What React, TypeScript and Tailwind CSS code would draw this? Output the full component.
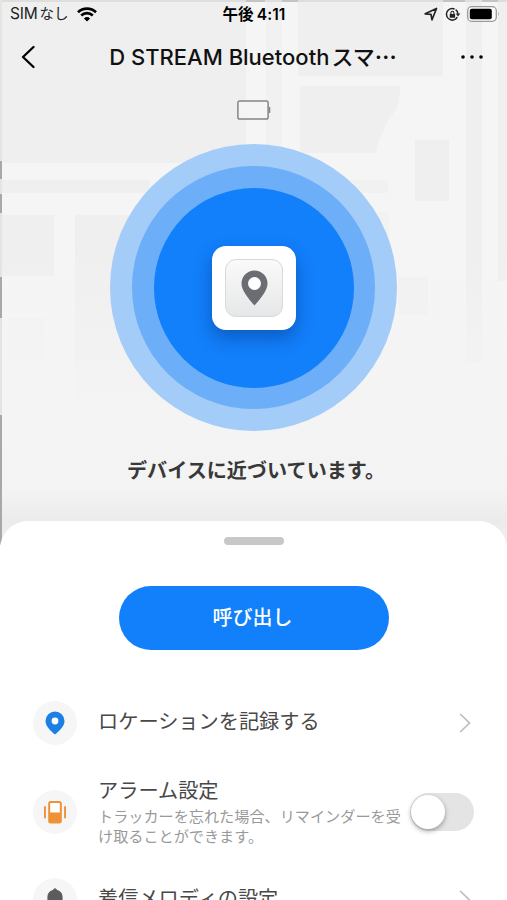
import { useState } from 'react';

const sans = "font-['Inter','Noto_Sans_CJK_JP',sans-serif]";

// Faded street map behind the header and the radar
function MapBackground() {
  return (
    <svg className="absolute inset-0 h-full w-full" viewBox="0 0 507 545" preserveAspectRatio="none" aria-hidden="true">
      <defs>
        <linearGradient id="mapFade" x1="0" y1="0" x2="0" y2="1">
          <stop offset="0.45" stopColor="#f4f4f4" stopOpacity="0" />
          <stop offset="0.78" stopColor="#f4f4f4" />
          <stop offset="0.9" stopColor="#f3f3f3" />
          <stop offset="0.957" stopColor="#ebebeb" />
          <stop offset="1" stopColor="#f0f0f0" />
        </linearGradient>
      </defs>
      <rect width="507" height="545" fill="#f5f5f5" />
      <g fill="#efefef">
        <rect x="2" y="2" width="244" height="161" />
        <rect x="266" y="2" width="16" height="150" fill="#f1f1f1" />
        <rect x="298" y="2" width="145" height="74" />
        <path d="M300 86h101l-4 22-9 12-10 23-2 10h-76z" />
        <rect x="2" y="180" width="148" height="13" />
        <rect x="330" y="180" width="58" height="13" fill="#f1f1f1" />
        <rect x="2" y="215" width="52" height="61" />
        <rect x="75" y="215" width="175" height="190" />
        <rect x="8" y="318" width="36" height="42" fill="#f1f1f1" />
        <rect x="340" y="212" width="49" height="60" fill="#f2f2f2" />
        <rect x="415" y="140" width="34" height="61" />
        <rect x="398" y="277" width="30" height="38" fill="#f1f1f1" />
        <rect x="466" y="2" width="16" height="360" />
        <rect x="498" y="2" width="9" height="279" />
      </g>
      <rect width="507" height="545" fill="url(#mapFade)" />
      <rect width="507" height="2" fill="#dedede" />
      <rect width="2" height="545" fill="#e4e4e4" />
      <g fill="#a8a8a8">
        <rect x="0" y="161" width="2" height="18" />
        <rect x="0" y="194" width="2" height="19" />
        <rect x="0" y="277" width="2" height="41" />
        <rect x="0" y="415" width="2" height="130" />
      </g>
      <g fill="#c4c4c4">
        <rect x="246" y="0" width="19" height="2" />
        <rect x="282" y="0" width="16" height="2" />
        <rect x="443" y="0" width="22" height="2" />
        <rect x="482" y="0" width="16" height="2" />
      </g>
    </svg>
  );
}

function StatusBar() {
  return (
    <div className="grid h-[28px] grid-cols-3 items-center pl-[10px] pr-[7px] text-black">
      <div className="flex items-center whitespace-nowrap text-[15.5px] leading-5 tracking-[-0.2px] text-[#222]">
        <span>SIM</span>
        <span className="ml-[2px] text-[14.5px] tracking-normal">なし</span>
        <svg className="ml-[8px]" width="20" height="15" viewBox="0 0 20 15" fill="none" stroke="#000" strokeWidth="2.7">
          <path d="M1 5.2a13 13 0 0 1 18 0" />
          <path d="M4.2 8.5a8.4 8.4 0 0 1 11.6 0" />
          <path d="M10 14.6 6.9 11.5a4.5 4.5 0 0 1 6.2 0z" fill="#000" stroke="none" />
        </svg>
      </div>
      <div className="-ml-[2px] pt-[2px] whitespace-nowrap text-center text-[15.5px] font-semibold leading-5 tracking-[0.1px]">
        <span className="font-bold">午後</span>
        <span className="ml-[3px]">4:11</span>
      </div>
      <div className="flex items-center justify-end">
        <svg width="14" height="14" viewBox="0 0 14 14" fill="none" stroke="#222" strokeWidth="1.7" strokeLinejoin="round">
          <path d="M1.200 6.800 12.500 1.500 8 12.800 7 7.400z" />
        </svg>
        <svg className="ml-[7px]" width="16" height="15" viewBox="0 0 16 15" fill="none" stroke="#222" strokeWidth="1.5">
          <path d="M12.300 10.200A5.800 5.800 0 1 1 9.600 2" />
          <path d="M10.600 2.600A5.800 5.800 0 0 1 13 6.600" />
          <path d="M10.700 6.400h4.600L13 9.400z" fill="#222" stroke="none" />
          <rect x="4.700" y="6.900" width="5.400" height="3.900" rx="0.600" fill="#222" stroke="none" />
          <path d="M5.900 7V5.800a1.500 1.500 0 0 1 3 0V7" strokeWidth="1.1" />
        </svg>
        <svg className="ml-[6px]" width="33" height="16" viewBox="0 0 33 16">
          <rect x="0.7" y="0.7" width="28.6" height="14.6" rx="4" fill="#fafafa" stroke="#999" strokeWidth="1.3" />
          <rect x="2.8" y="2.7" width="22" height="10.6" rx="2" fill="#000" />
          <path d="M31 5.8q1.500 2.200 0 4.400z" fill="#999" />
        </svg>
      </div>
    </div>
  );
}

function Header() {
  return (
    <header className="flex h-[58px] items-center justify-between pl-[21px] pr-[24px]">
      <button aria-label="Back" className="w-[26px]">
        <svg width="14" height="24" viewBox="0 0 14 24" fill="none" stroke="#000" strokeWidth="2.3" strokeLinecap="round" strokeLinejoin="round">
          <path d="M12.5 2 2 12l10.5 10" />
        </svg>
      </button>
      <h1 className="-ml-[2px] -mt-[2px] whitespace-nowrap text-[22px] font-medium leading-7 text-[#111]">
        D STREAM Bluetooth<span className="ml-[2px]">スマ</span>
        <span className="font-['Noto_Sans_CJK_JP',sans-serif] font-bold">⋯</span>
      </h1>
      <button aria-label="More">
        <svg width="22" height="4" viewBox="0 0 22 4" fill="#000">
          <circle cx="2" cy="2" r="1.8" />
          <circle cx="11" cy="2" r="1.8" />
          <circle cx="20" cy="2" r="1.8" />
        </svg>
      </button>
    </header>
  );
}

function Radar() {
  return (
    <div className="mx-auto mt-[24px] flex size-[287px] items-center justify-center rounded-full bg-[#a3ccf8]">
      <div className="flex size-[243px] items-center justify-center rounded-full bg-[#6caef7]">
        <div className="flex size-[200px] items-center justify-center rounded-full bg-[#127ffb]">
          <div className="flex size-[84px] items-center justify-center rounded-[14px] bg-white shadow-[0_8px_18px_rgba(0,40,110,0.4)]">
            <div className="flex size-[58px] items-center justify-center rounded-[11px] border border-[#d9d9d9] bg-linear-to-b from-[#fafafa] to-[#e6e7e8]">
              <svg className="ml-[2px]" width="27" height="36" viewBox="0 0 27 36">
                <path fill="#6a6d71" d="M13.500.5a13 13 0 0 1 13 13c0 7-6.500 14.500-13 22C7 28 .5 20.500.5 13.500a13 13 0 0 1 13-13z" />
                <circle cx="13.5" cy="13.5" r="6.5" fill="#fff" />
              </svg>
            </div>
          </div>
        </div>
      </div>
    </div>
  );
}

function Chevron() {
  return (
    <svg width="12" height="20" viewBox="0 0 12 20" fill="none" stroke="#bdbdbd" strokeWidth="1.7">
      <path d="m1.200 1 9.300 9-9.300 9" />
    </svg>
  );
}

function RowIcon({ children }: { children: React.ReactNode }) {
  return (
    <div className="flex size-[44px] shrink-0 items-center justify-center rounded-full bg-[#f6f6f6]">{children}</div>
  );
}

export default function App() {
  const [alarm, setAlarm] = useState(false);

  return (
    <div className={`relative h-[900px] w-[507px] overflow-hidden bg-white ${sans}`}>
      <div className="absolute inset-x-0 top-0 h-[545px]">
        <MapBackground />
      </div>

      <div className="relative flex h-full flex-col">
        <div className="h-[521px] shrink-0">
          <StatusBar />
          <Header />
          <svg className="mx-auto mt-[14px] block" width="34" height="20" viewBox="0 0 34 20" fill="none">
            <rect x="0.9" y="0.9" width="30.200" height="18.200" rx="1.800" fill="#f5f5f5" stroke="#858585" strokeWidth="1.500" />
            <path d="M32.500 7v6" stroke="#858585" strokeWidth="1.500" />
          </svg>
          <Radar />
          <p className="ml-[127px] mt-[26px] whitespace-nowrap text-[20.1px] font-bold leading-7 text-[#383838]">
            デバイスに近づいています。
          </p>
        </div>

        <main className="flex-1 rounded-t-[28px] bg-white pt-[16px]">
          <div className="mx-auto h-[8px] w-[60px] rounded-full bg-[#c8c8c8]" />
          <button className="mx-auto mt-[41px] block h-[64px] w-[270px] rounded-full bg-[#127ffb] pr-[2px] text-[20px] font-medium text-white">
            呼び出し
          </button>

          <div className="mt-[51px] flex h-[44px] items-center pl-[33px] pr-[36px]">
            <RowIcon>
              <svg width="20" height="24" viewBox="0 0 20 24">
                <path fill="#1b7fe6" d="M10 .5A9.500 9.500 0 0 1 19.500 10c0 5.500-5.500 10-9.500 13.500C6 20 .5 15.500.5 10A9.500 9.500 0 0 1 10 .5z" />
                <circle cx="10" cy="10" r="3.400" fill="#fff" />
              </svg>
            </RowIcon>
            <span className="-mt-[2px] ml-[21px] flex-1 text-[20.200px] leading-7 text-[#484848]">ロケーションを記録する</span>
            <Chevron />
          </div>

          <div className="mt-[32px] flex pl-[33px] pr-[33px]">
            <div className="pt-[13px]">
              <RowIcon>
                <svg width="24" height="24" viewBox="0 0 24 24" fill="#ee9137">
                  <rect x="6.200" y="2" width="11.600" height="20.500" rx="1.500" fill="#fff" stroke="#ee9137" strokeWidth="2" />
                  <path d="M6 12.500h12V22H6z" />
                  <rect x="1" y="6" width="1.900" height="12.500" rx="0.900" />
                  <rect x="21.100" y="6" width="1.900" height="12.500" rx="0.900" />
                </svg>
              </RowIcon>
            </div>
            <div className="ml-[21px] w-[306px] shrink-0">
              <div className="text-[20.200px] leading-7 text-[#484848]">アラーム設定</div>
              <div className="mt-[2px] whitespace-nowrap text-[15.150px] leading-5 text-[#999]">
                トラッカーを忘れた場合、リマインダーを受
                <br />
                け取ることができます。
              </div>
            </div>
            <button
              role="switch"
              aria-checked={alarm}
              aria-label="アラーム設定"
              onClick={() => setAlarm(!alarm)}
              className={`ml-[6px] mt-[16px] flex h-[38px] w-[64px] shrink-0 items-center rounded-full px-[1px] ${
                alarm ? 'justify-end bg-[#127ffb]' : 'bg-[#e4e4e4]'
              }`}
            >
              <span className="size-[34px] rounded-full bg-white shadow-[0_2px_5px_rgba(0,0,0,0.35)]" />
            </button>
          </div>

          <div className="mt-[31px] flex h-[44px] items-center pl-[33px] pr-[36px]">
            <RowIcon>
              <svg className="-mt-[2px]" width="20" height="22" viewBox="0 0 20 22" fill="#5c5c5c">
                <path d="M10 0 12.300 2C15.500 3 17.600 5.600 17.600 9v6l1.900 3H.5l1.900-3V9C2.400 5.600 4.500 3 7.700 2z" />
                <path d="M7 19h6a3 2.500 0 0 1-6 0z" />
              </svg>
            </RowIcon>
            <span className="-mt-[3px] ml-[21px] flex-1 text-[20.200px] leading-7 text-[#484848]">着信メロディの設定</span>
            <Chevron />
          </div>
        </main>
      </div>
    </div>
  );
}
